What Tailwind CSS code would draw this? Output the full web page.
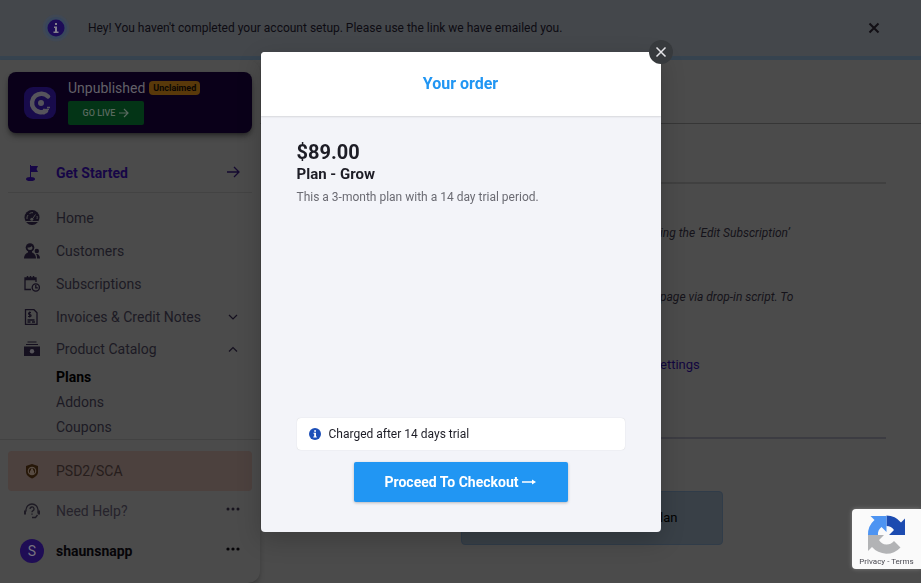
<!DOCTYPE html>
<html lang="en">
<head>
<meta charset="utf-8">
<meta name="viewport" content="width=device-width, initial-scale=1">
<title>Your order</title>
<script src="https://cdn.jsdelivr.net/npm/@tailwindcss/browser@4"></script>
</head>
<body class="flex min-h-screen flex-col overflow-hidden bg-[#4b4b4b] font-['Roboto',sans-serif] text-sm text-[#1c1a24]">

<header class="flex h-15 items-center border-b-4 border-[#36434f] bg-[#44474b] pl-[42px] pr-[39px] text-xs text-[#0d0b12]">
  <svg class="mr-[18px] size-7" viewBox="0 0 28 28" aria-hidden="true">
    <circle cx="14" cy="14" r="13.500" fill="#404854"/><circle cx="14" cy="14" r="11" fill="#38465c"/>
    <circle cx="14" cy="14" r="8.500" fill="#1d0c57"/>
    <path d="M13 9h2v2h-2zM12 12.500h3v5h1.500v1.500h-5v-1.500H13V14h-1z" fill="#83808c"/>
  </svg>
  <p class="flex-1">Hey! You haven't completed your account setup. Please use the link we have emailed you.</p>
  <button type="button" aria-label="Dismiss" class="flex size-4 items-center justify-center">
    <svg class="size-3" viewBox="0 0 12 12" fill="none" stroke="#120f14" stroke-width="2"><path d="M1.500 1.500l9 9M10.500 1.500l-9 9"/></svg>
  </button>
</header>

<div class="flex flex-1">
  <aside class="flex w-65 shrink-0 flex-col rounded-br-xl rounded-tr-xl px-2 pt-3 shadow-md shadow-black/20">
    <section class="flex h-[61px] items-center rounded-lg bg-[#0a0019] pl-4 shadow-md shadow-black/40">
      <svg class="size-8 shrink-0" viewBox="0 0 32 32" aria-hidden="true">
        <rect width="32" height="32" rx="9" fill="#180b4b"/>
        <path d="M24 9.500A9.300 9.300 0 1 0 22 24" fill="none" stroke="#56545c" stroke-width="4.500" stroke-linecap="round"/>
        <circle cx="17" cy="16" r="3" fill="#56545c"/>
        <path d="M16 24.500h2m1-2h2m0 2h2m0-2h2m-6 4h2m2-6h3" stroke="#56545c" stroke-width="1.500"/>
      </svg>
      <div class="ml-3 mb-1">
        <div class="flex h-6 items-center gap-1">
          <h2 class="text-sm text-[#626068]">Unpublished</h2>
          <span class="rounded-sm bg-[#59390a] px-1 text-[9px] leading-[14px] font-bold text-[#0b0703]">Unclaimed</span>
        </div>
        <button type="button" class="mt-px flex h-6 w-19 items-center justify-center gap-1 rounded-xs bg-[#033416] text-[9px] font-medium text-[#59695f]">GO LIVE
          <svg class="size-[10px]" viewBox="0 0 10 10" fill="none" stroke="currentColor" stroke-width="1.200"><path d="M0 5h9M5 1l4 4-4 4"/></svg>
        </button>
      </div>
    </section>

    <a href="#" class="mt-5 flex h-10 items-center border-b border-[#434343] pl-4 pr-3 font-bold text-[#160646]">
      <svg class="mr-4 size-4" viewBox="0 0 16 16" fill="#160646"><path d="M6 0h1v1h7l-1.500 3L14 7H7v6H6z"/><ellipse cx="6.500" cy="14" rx="4.500" ry="2"/></svg>
      <span class="flex-1">Get Started</span>
      <svg class="size-3.5" viewBox="0 0 14 14" fill="none" stroke="#150a30" stroke-width="1.300"><path d="M1 6h12M8 1l5 5-5 5"/></svg>
    </a>

    <nav class="mt-2 flex flex-col" aria-label="Main">
      <a href="#" class="flex h-[33px] items-center pl-4">
        <svg class="mr-4 size-4" viewBox="0 0 16 16"><circle cx="8" cy="7.500" r="7.500" fill="#15101f"/><path d="M8 9.500l3.500-5M3 9a5 5 0 0 1 1-4M5.500 3.500A5 5 0 0 1 9 2.700M13 9a5 5 0 0 0 0-3M2 11.500h12" stroke="#4b4b4b" stroke-width="1" fill="none"/><circle cx="7.800" cy="9.300" r="1.500" fill="#4b4b4b"/></svg>Home</a>
      <a href="#" class="flex h-[33px] items-center pl-4">
        <svg class="mr-4 size-4" viewBox="0 0 16 16" fill="#15101f"><circle cx="6" cy="4.500" r="4.300"/><path d="M0 15.500c0-3 1.500-5 4-6v-2h4v2c2.500 1 4 3 4 6z"/><circle cx="12.800" cy="8" r="2.200"/><path d="M12 11c2.500 0 4 1.500 4 4.500h-3c0-2 0-3-1-4.500z"/><path d="M3.500 4.500c2 0 3.500-.5 4-1.500l1 1.500a2.500 2.500 0 0 1-5 0z" fill="#4b4b4b"/></svg>Customers</a>
      <a href="#" class="flex h-[33px] items-center pl-4">
        <svg class="mr-4 size-4" viewBox="0 0 16 16" fill="none" stroke="#15101f" stroke-width="1.300"><path d="M7 13.500H1V2h11v4M1 3.500h11" /><path d="M3.500 0v3M6.500 0v3M9.500 0v3" stroke-width="1.500"/><circle cx="11.800" cy="11.500" r="3.600"/><path d="M11.800 9v2.800h2"/></svg>Subscriptions</a>
      <a href="#" class="flex h-[33px] items-center pl-4 pr-3">
        <svg class="mr-4 size-4" viewBox="0 0 16 16" fill="none" stroke="#15101f" stroke-width="1.300"><path d="M1.500.7h8.500l3 3v11.600H1.500z"/><path d="M3.500 11h7M3.500 13h3m1.500 0h3"/><path d="M7 3.500H5.500a1 1 0 0 0 0 2h.6a1 1 0 0 1 0 2H4M5.700 2.500v6" stroke-width="1.100"/></svg>
        <span class="flex-1">Invoices &amp; Credit Notes</span>
        <svg class="size-3.5" viewBox="0 0 14 14" fill="none" stroke="#15101f" stroke-width="1.200"><path d="M3 5l4 4 4-4"/></svg></a>
      <a href="#" class="flex h-8 items-center pl-4 pr-3">
        <svg class="mr-4 size-4" viewBox="0 0 16 16" fill="#15101f"><path d="M3.500 .5h9v1h-9zM2 3h12v1H2zM0 5.500h16V15H0z"/><circle cx="8" cy="10.200" r="2.200" fill="#56545a"/></svg>
        <span class="flex-1">Product Catalog</span>
        <svg class="size-3.5" viewBox="0 0 14 14" fill="none" stroke="#15101f" stroke-width="1.200"><path d="M3 9.500l4-4 4 4"/></svg></a>
      <div class="flex flex-col gap-px pl-12 leading-6">
        <a href="#" class="font-bold text-black">Plans</a>
        <a href="#">Addons</a>
        <a href="#">Coupons</a>
      </div>
    </nav>

    <div class="-mx-2 border-t border-[#424242] px-2 pt-[11px]">
      <a href="#" class="flex h-10 items-center rounded bg-[#4c413e] pl-4 text-[#261d1c]">
        <svg class="mr-4 size-4" viewBox="0 0 16 16" fill="none"><path d="M8 1l6 2v6c0 3-2.500 5-6 6.500C4.500 14 2 12 2 9V3z" fill="#261708"/><circle cx="8" cy="8" r="3.700" stroke="#574b42" stroke-width="1.200"/><path d="M6 7.500h4V11H6zM7 7.500V5.500h2v2" fill="#574b42"/></svg>PSD2/SCA</a>
      <div class="flex h-10 items-center pl-4 pr-3 text-[#26232b]">
        <svg class="mr-4 size-4" viewBox="0 0 16 16" fill="none" stroke="#1e1b24" stroke-width="1.300"><path d="M2 8.500V7a6 6 0 0 1 12 0v3.500M13.500 12l-2 2.500H8"/><path d="M1 7.500v4M15 7.500v4" stroke-width="2"/><path d="M6 6a2 2 0 1 1 2.800 1.800c-.6.300-.8.700-.8 1.500M8 10.500v1.300"/></svg>
        <span class="flex-1">Need Help?</span>
        <button type="button" aria-label="Help options"><svg class="mb-1 h-1 w-3.5" viewBox="0 0 14 4" fill="#17131d"><circle cx="2" cy="2" r="1.500"/><circle cx="7" cy="2" r="1.500"/><circle cx="12" cy="2" r="1.500"/></svg></button>
      </div>
      <div class="flex h-10 items-center pl-3 pr-3 font-bold text-[#060508]">
        <span class="mr-3 flex size-6 items-center justify-center rounded-full bg-[#1f0d55] font-normal text-[#77737f]">S</span>
        <span class="flex-1">shaunsnapp</span>
        <button type="button" aria-label="Account options"><svg class="mb-1 h-1 w-3.5" viewBox="0 0 14 4" fill="#050407"><circle cx="2" cy="2" r="1.600"/><circle cx="7" cy="2" r="1.600"/><circle cx="12" cy="2" r="1.600"/></svg></button>
      </div>
    </div>
  </aside>

  <main class="flex min-w-0 flex-1 flex-col">
    <div class="h-16 border-b border-[#363636]"></div>
    <div class="ml-[38px] mr-[35px] flex flex-col">
      <div class="h-15 border-b-2 border-[#404040]"></div>
      <div class="flex h-[255px] flex-col border-b-2 border-[#3c3c42] pl-[362px] pt-[41px] text-xs whitespace-nowrap">
        <p class="leading-4 text-[#15131a] italic">ing the ‘Edit Subscription’</p>
        <p class="mt-12 leading-4 text-[#15131a] italic">page via drop-in script. To</p>
        <a href="#" class="mt-[50px] text-[13px] leading-5 text-[#12063f]">ettings</a>
      </div>
      <button type="button" class="mt-13 flex h-[54px] w-[262px] items-center self-center rounded border border-[#303c49] bg-[#394047] pl-[198px] text-[13px] text-black">lan</button>
    </div>
  </main>
</div>

<div class="fixed inset-0 flex items-center justify-center">
  <div role="dialog" aria-modal="true" aria-labelledby="order-title" class="relative flex h-120 w-100 flex-col rounded bg-[#f3f4f9] text-[#1d1d26] shadow-[0_8px_24px_rgba(0,0,0,0.2)]">
    <button type="button" aria-label="Close" class="absolute -top-3 -right-3 flex size-6 items-center justify-center rounded-full bg-[#373a3d]">
      <svg class="size-3" viewBox="0 0 12 12" fill="none" stroke="#e4e4e8" stroke-width="1.500"><path d="M1.500 1.500l9 9M10.500 1.500l-9 9"/></svg>
    </button>
    <header class="flex h-16 items-center justify-center rounded-t bg-white shadow-[0_1px_2px_rgba(0,0,0,0.12)]">
      <h1 id="order-title" class="text-base font-bold text-[#2196f3]">Your order</h1>
    </header>
    <div class="flex flex-1 flex-col px-9 pt-6 pb-[30px]">
      <p class="text-xl leading-6 font-bold">$89.00</p>
      <h2 class="text-[15px] leading-5 font-bold">Plan - Grow</h2>
      <p class="mt-1 text-xs leading-[18px] text-[#6b6b73]">This a 3-month plan with a 14 day trial period.</p>
      <p class="mt-auto flex h-8 items-center rounded-sm bg-white pl-3 text-xs shadow-[0_0_1px_rgba(0,0,0,0.2)]">
        <svg class="mr-2 size-3" viewBox="0 0 12 12"><circle cx="6" cy="6" r="6" fill="#1c4fb8"/><path d="M5.200 2.200h1.800v1.600H5.200zM4.500 4.800H7v3.700h.8v1H4.300v-1h.9V5.800h-.7z" fill="#fff"/></svg>
        Charged after 14 days trial</p>
      <button type="button" class="mt-3 flex h-10 w-[214px] items-center justify-center gap-1 self-center rounded-xs bg-[#2196f3] text-sm font-bold text-white shadow-[0_1px_3px_rgba(0,0,0,0.25)]">Proceed To Checkout
        <svg class="h-2 w-3.5" viewBox="0 0 14 8" fill="#fff"><path d="M0 3.200h10V1.500L14 4l-4 2.500V4.800H0z"/></svg>
      </button>
    </div>
  </div>
</div>

<aside aria-label="reCAPTCHA" class="fixed right-0 bottom-[14px] flex h-15 w-[69px] flex-col items-center rounded-l-sm bg-[#fafafa] pt-1.5 text-[8px] leading-4 text-[#4a4a52] shadow-[0_0_4px_#808080]">
  <svg class="size-[39px] shrink-0" viewBox="0 0 39 39" aria-hidden="true">
    <path d="M19.500.5A19 19 0 0 1 34 7.500L38 3.500V20H22l5-5a9 9 0 0 0-7.500-4z" fill="#1c4bb0"/>
    <path d="M1 20A19 19 0 0 1 7.500 5L3.500 1h16v16l-5-5A9 9 0 0 0 11 20z" fill="#4d94f2"/>
    <path d="M1 20h16l-5 5a9 9 0 0 0 15 1l6.500 6.500A19 19 0 0 1 5 32L1 36z" fill="#b2b3b5"/>
  </svg>
  <p class="whitespace-nowrap"><a href="#">Privacy</a> - <a href="#">Terms</a></p>
</aside>
</body>
</html>
